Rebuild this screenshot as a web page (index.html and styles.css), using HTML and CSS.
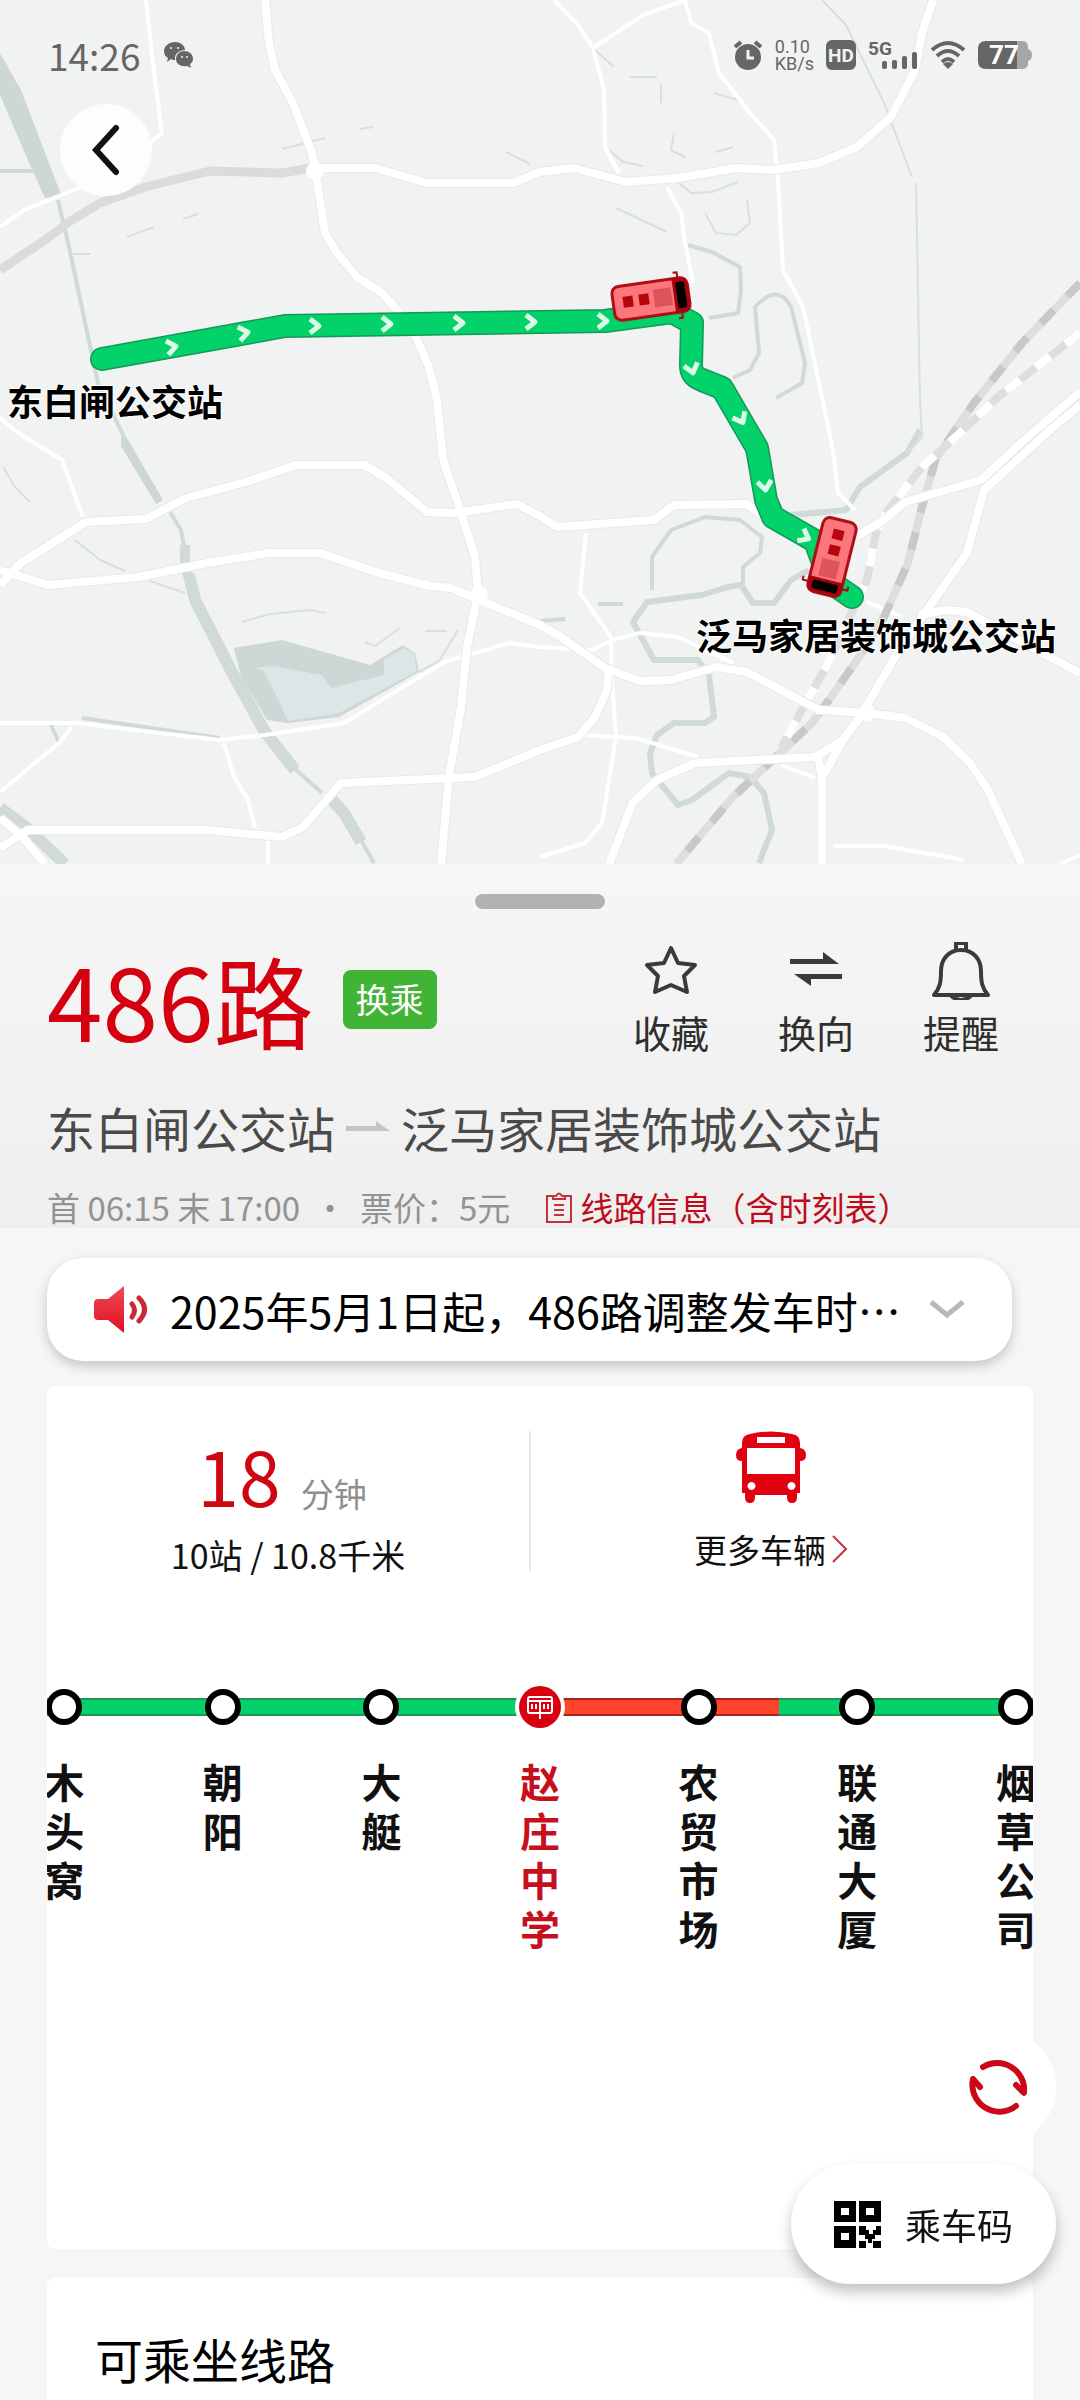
FILE: index.html
```html
<!DOCTYPE html>
<html lang="zh-CN">
<head>
    <meta charset="UTF-8">
    <meta name="viewport" content="width=device-width, initial-scale=1.0">
    <title>486路</title>
    <link rel="stylesheet" href="styles.css">
</head>
<body>
<div class="app">

    <div class="map">
        <svg class="map-canvas" viewBox="0 0 1080 864">
            <defs>
                <path id="arrow" d="M-5 -7 L4 0 L-5 7"/>
                <g id="bus-top">
                    <path class="mirror" d="M29 -18 v-5 h-4 M29 18 v5 h-4"/>
                    <rect class="bus-body" x="-38" y="-17" width="76" height="34" rx="7"/>
                    <path class="bus-front" d="M23 -17 h9 q6 0 6 6 v22 q0 6 -6 6 h-9 z"/>
                    <rect x="26" y="-13" width="9" height="26" rx="2"/>
                    <rect class="hatch" x="-28" y="-6" width="10" height="11"/>
                    <rect class="hatch" x="-12" y="-6" width="10" height="11"/>
                    <rect class="hatch-big" x="3" y="-9" width="18" height="18"/>
                </g>
                <g id="roads">
                    <path d="M265 0 L269 43 L275 70 L293 103 L312 153 L315 170 L320 200 L325 233 L337 253 L358 278 L382 293 L399 312 L415 335 L429 367 L437 400 L442 450 L444 463 L458 503 L475 557 L478 593 L467 647 L461 707 L449 777 L441 864"/>
                    <path d="M315 168 L375 168 L427 183 L513 183 L540 172 L574 168 L626 182 L678 178 L736 168 L774 170 L819 163 L857 147 L891 117 L915 70 L922 33 L933 0"/>
                    <path d="M0 585 L21 563 L86 522 L146 519 L186 498 L246 482 L296 465 L365 465 L389 480 L427 512 L455 513 L517 504 L540 516 L557 527 L654 520 L674 505 L747 504 L764 517"/>
                    <path d="M0 570 L48 585 L138 577 L207 563 L269 553 L320 553 L379 573 L430 586 L451 588 L479 600 L540 625 L561 637 L605 668 L640 681 L671 680 L716 667 L747 672 L819 710 L867 713 L905 718 L943 737 L970 763 L988 790 L1022 864"/>
                    <path d="M0 848 L28 830 L207 830 L282 837 L303 827 L341 783 L475 777 L540 750 L578 737 L595 717 L607 690 L609 668"/>
                    <path d="M0 818 L21 835 L45 864"/>
                    <path d="M609 864 L633 802 L657 780 L695 763 L815 757 L843 740 L860 717 L874 693 L895 657 L922 617 L967 553 L984 490 L1050 430 L1080 405"/>
                    <path d="M857 536 L884 520 L905 502 L981 480 L1022 442 L1080 392"/>
                    <path d="M919 615 L946 610 L967 612 L1050 657 L1080 673"/>
                    <path d="M843 740 L822 778 V864 M818 757 L822 778"/>
                </g>
            </defs>

            <!-- water -->
            <path class="water" d="M0 53 L21 90 L62 197 L45 198 L33 172 L0 95 Z"/>
            <path class="water" d="M121 430 L128 440 L163 500 L156 504 L121 446 Z"/>
            <path class="water" d="M234 648 L282 640 L370 665 L403 645 L415 653 L419 672 L339 717 L288 723 L267 720 L241 677 Z"/>
            <path class="shoal" d="M255 668 L272 666 L322 675 L331 688 L384 675 L384 660 L403 648 L414 654 L417 671 L339 713 L288 721 L275 693 L263 670 Z"/>
            <path class="river thin" d="M0 171 H34 M58 200 L69 247 L86 327 L98 383 L124 437 M170 512 L181 530 L184 546 M294 768 L322 793 M361 840 L374 863 M82 718 L220 738 M50 723 L59 742"/>
            <path class="river mid" d="M185 545 V567 L191 583"/>
            <path class="river wide" d="M189 575 L195 600 L234 676 L265 732 L295 770 M332 800 L344 813 L361 842 M0 808 L26 827 L65 864"/>
            <path class="river bend" d="M920 430 L907 453 L860 487 L846 510 L826 512 L791 515 M809 570 L791 580 L774 603 L753 603 L741 585 L728 587 L702 595 L647 602 L633 622 L654 660 L698 660 L709 675 L714 717 L705 723 L674 723 L657 735 L650 753 L652 773 L678 805 L692 800 L729 773 L750 777 L764 793 L772 830 L759 863"/>
            <path class="river thin" d="M652 590 V557 L671 530 L705 517 L740 520 L762 537 L760 553 L743 567 V585 M540 621 L565 619 M598 604 H623"/>
            <path class="river thin" d="M688 245 L712 252 L740 267 L741 290 L738 313 L709 318 M733 378 L750 370 L759 353 L755 307 Q778 282 791 307 L805 363 L802 383 L776 398"/>
            <path class="river hair" d="M822 0 L846 25 L884 103 L912 177 M916 183 L920 400 L922 437 L907 453 M616 208 L667 232 M678 182 L691 193 L712 192 L738 182 M705 213 L716 233 L736 235 L750 223 L747 200 M593 48 L614 67 M630 77 L657 77 M661 83 V103 M609 150 L623 162 L643 166 M674 133 L671 150 L685 157 M714 93 L738 100 M716 152 L733 147 M506 152 L530 164 M282 149 L325 138 M360 129 L373 127 M127 237 L154 227 M183 219 L198 214 M73 254 H90 M3 467 L15 487 L30 502 M75 540 L100 560 L125 571 M150 581 L185 593 M242 622 L270 614 L310 610 L325 613 M365 642 L375 646 L400 628 M425 631 H447 M458 630 L439 661 L419 672"/>

            <!-- minor streets -->
            <path class="street" d="M146 0 L155 80 L162 133 L150 142 M0 227 L24 210 L81 187 M554 0 L578 25 L593 48 L604 90 L605 147 L619 173 M593 48 L643 15 L685 0 L691 23 L709 33 L719 73 L750 113 L774 140 L778 180 L783 270 L803 307 L833 450 L838 493 L855 510 M667 187 L681 213 L685 243 L693 283"/>
            <path class="street" d="M0 418 L17 432 L62 460 L83 517 M0 723 H76 L220 740 L265 735 L344 723 L444 662 L510 643 L540 647 L592 650 L612 640 L640 633 L678 637 L733 663 M224 743 L234 777 L248 800 L255 828 M268 838 V864 M72 727 L59 743 L0 792"/>
            <path class="street" d="M586 533 L580 593 L611 637 L612 683 L616 737 L602 823 L585 843 L540 857 M581 735 L636 738 L698 757 M833 846 H884 L964 860 M781 765 L815 778 M867 602 L902 617 M1060 864 L1080 855"/>

            <!-- railways -->
            <path class="rail-left" d="M0 270 L45 240 L69 222 L100 203 L145 187 L210 171 L282 173 L310 168"/>
            <path class="rail" d="M1080 283 L1022 343 L974 403 L936 458 L922 507 L908 563 L884 617 L857 660 L829 700 L812 723 L781 752 L733 797 L676 864"/>
            <path class="rail-dash" d="M1080 283 L1022 343 L974 403 L936 458 L922 507 L908 563 L884 617 L857 660 L829 700 L812 723 L781 752 L733 797 L676 864"/>
            <path class="rail" d="M1080 333 L998 397 L960 433 L922 467 L888 510 L876 533 L867 580 L826 667 L809 697 L781 748"/>
            <path class="rail-dash white" d="M1080 333 L998 397 L960 433 L922 467 L888 510 L876 533 L867 580 L826 667 L809 697 L781 748"/>

            <use href="#roads" class="road-edge"/>
            <use href="#roads" class="road"/>
            <circle class="junction" cx="315" cy="171" r="9"/>
            <circle class="junction" cx="479" cy="595" r="9"/>
            <circle class="junction" cx="867" cy="713" r="8"/>

            <!-- bus line -->
            <path class="line-edge" d="M102 359 L285 326 L605 321 L672 312 L692 323 L691 365 Q691 376 702 380 L722 388 L757 448 L766 500 L773 517 L815 541 L830 582 L852 597"/>
            <path class="line-fill" d="M102 359 L285 326 L605 321 L672 312 L692 323 L691 365 Q691 376 702 380 L722 388 L757 448 L766 500 L773 517 L815 541 L830 582 L852 597"/>
            <g class="arrows">
                <use href="#arrow" transform="translate(172 347) rotate(-10)"/>
                <use href="#arrow" transform="translate(244 333) rotate(-10)"/>
                <use href="#arrow" transform="translate(315 326)"/>
                <use href="#arrow" transform="translate(387 324)"/>
                <use href="#arrow" transform="translate(459 323)"/>
                <use href="#arrow" transform="translate(531 322)"/>
                <use href="#arrow" transform="translate(603 321)"/>
                <use href="#arrow" transform="translate(692 369) rotate(75)"/>
                <use href="#arrow" transform="translate(741 419) rotate(62)"/>
                <use href="#arrow" transform="translate(765 486) rotate(82)"/>
                <use href="#arrow" transform="translate(805 537) rotate(28)"/>
            </g>
            <use href="#bus-top" transform="translate(651 299) rotate(-8)"/>
            <use href="#bus-top" transform="translate(832 557) rotate(104)"/>

            <text class="map-label" x="7" y="416">东白闸公交站</text>
            <text class="map-label" x="696" y="650">泛马家居装饰城公交站</text>
        </svg>

        <div class="status-bar">
            <span class="clock">14:26</span>
            <svg class="wechat" width="30" height="26" viewBox="0 0 30 26">
                <path d="M11 0 C17 0 21 4 21 8 C15 8 11 12 11 16 C11 17 11 18 12 18 C10 18 8 18 7 17 L3 20 L4 16 C1 14 0 12 0 9 C0 4 5 0 11 0 Z"/>
                <path d="M20 9 C25 9 29 12 29 17 C29 19 28 21 26 22 L27 26 L23 24 C17 25 12 22 12 17 C12 12 16 9 20 9 Z"/>
                <g class="eyes"><circle cx="7" cy="6" r="1"/><circle cx="14" cy="6" r="1"/><circle cx="18" cy="15" r="1"/><circle cx="23" cy="15" r="1"/></g>
            </svg>
            <div class="status-icons">
                <svg width="30" height="30" viewBox="0 0 30 30">
                    <circle cx="15" cy="17" r="13"/>
                    <path class="line" d="M2 7 L8 2 M28 7 L22 2"/>
                    <path class="line light" d="M15 10 V18 H21"/>
                </svg>
                <span class="net-speed">0.10<br>KB/s</span>
                <svg width="30" height="30" viewBox="0 0 30 30">
                    <rect width="30" height="30" rx="6"/>
                    <text class="hd" x="15" y="22" text-anchor="middle">HD</text>
                </svg>
                <svg width="50" height="36" viewBox="0 0 50 36">
                    <text class="gen" x="0" y="18">5G</text>
                    <rect x="14" y="24" width="5" height="8" rx="2"/>
                    <rect x="24" y="23" width="5" height="9" rx="2"/>
                    <rect x="34" y="19" width="5" height="13" rx="2"/>
                    <rect x="44" y="15" width="5" height="17" rx="2"/>
                </svg>
                <svg width="36" height="30" viewBox="0 0 36 30">
                    <path class="wave" d="M2 10 Q18 -4 34 10 M7 16 Q18 6 29 16 M12 22 Q18 16 24 22"/>
                    <path d="M13 24 Q18 20 23 24 L18 29 Z"/>
                </svg>
                <svg width="54" height="28" viewBox="0 0 54 28">
                    <path class="bat-empty" d="M38 0 h6 q6 0 6 6 v2 q4 1 4 6 t-4 6 v2 q0 6 -6 6 h-6 z"/>
                    <path d="M8 0 H39 V28 H8 Q0 28 0 20 V8 Q0 0 8 0 Z"/>
                    <text class="bat" x="26" y="23" text-anchor="middle">77</text>
                </svg>
            </div>
        </div>

        <button class="back-btn" aria-label="返回">
            <svg width="28" height="52" viewBox="0 0 28 52"><path d="M24 4 L4 26 L24 48"/></svg>
        </button>
    </div>

    <header class="panel">
        <div class="handle"></div>
        <div class="title-row">
            <h1>486路</h1>
            <button class="transfer-btn">换乘</button>
            <div class="actions">
                <button class="action">
                    <svg width="58" height="58" viewBox="0 0 58 58"><path d="M29 6 L36 21 L53 23 L42 34 L45 50 L29 43 L13 50 L16 34 L5 23 L22 21 Z"/></svg>
                    <span>收藏</span>
                </button>
                <button class="action">
                    <svg width="58" height="58" viewBox="0 0 58 58">
                        <path class="solid" d="M3 17 H36 V10 L52 22 H3 Z M55 32 V37 H24 V44 L7 32 Z"/>
                    </svg>
                    <span>换向</span>
                </button>
                <button class="action">
                    <svg width="58" height="58" viewBox="0 0 58 58">
                        <path d="M24 8 V1 H34 V8 M29 8 C16 8 9 18 9 29 C9 40 8 46 2 53 H56 C50 46 49 40 49 29 C49 18 42 8 29 8 Z M19 54 Q29 62 39 54"/>
                    </svg>
                    <span>提醒</span>
                </button>
            </div>
        </div>
        <div class="direction">
            <span>东白闸公交站</span>
            <svg width="44" height="12" viewBox="0 0 44 12"><path d="M0 5 H30 V0 L44 10 H0 Z"/></svg>
            <span>泛马家居装饰城公交站</span>
        </div>
        <div class="schedule">
            <span>首 06:15 末 17:00</span>
            <span class="dot">·</span>
            <span>票价：5元</span>
            <a class="info-link" href="#">
                <svg width="26" height="31" viewBox="0 0 26 31">
                    <path d="M7 4 H1 V30 H25 V4 H19 M7 7 V4 H10 Q13 -1 16 4 H19 V7 Z M8 13 H18 M8 18 H18 M8 23 H18"/>
                </svg>
                <span>线路信息（含时刻表）</span>
            </a>
        </div>
    </header>

    <button class="notice">
        <svg width="54" height="48" viewBox="0 0 54 48">
            <defs>
                <linearGradient id="horn" x1="0" y1="0" x2="0" y2="1">
                    <stop offset="0" stop-color="#ee4a54"/>
                    <stop offset="1" stop-color="#e0101f"/>
                </linearGradient>
            </defs>
            <path fill="url(#horn)" d="M4 13 H14 L30 0 V47 L14 34 H4 Q0 34 0 30 V17 Q0 13 4 13 Z"/>
            <path class="sound" d="M38 18 Q43 24 38 31 M45 12 Q56 23 45 35"/>
        </svg>
        <span class="notice-text">2025年5月1日起，486路调整发车时…</span>
        <svg class="expand" width="36" height="20" viewBox="0 0 36 20"><path d="M2 2 L18 15 L34 2"/></svg>
    </button>

    <main class="card">
        <div class="stats">
            <div class="stat">
                <p class="eta"><strong>18</strong><span>分钟</span></p>
                <p class="distance">10站 / 10.8千米</p>
            </div>
            <a class="stat more" href="#">
                <svg width="70" height="72" viewBox="0 0 70 72">
                    <path fill-rule="evenodd" d="M6 12 Q6 4 14 3 Q35 -2 56 3 Q64 4 64 12 V17 Q70 18 70 24 Q70 30 64 30 V62 H61 V66 Q61 72 56 72 Q51 72 51 66 V64 H19 V66 Q19 72 14 72 Q9 72 9 66 V62 H6 V30 Q0 30 0 24 Q0 18 6 17 Z M21 6 V12 H49 V6 Z M11 17 V43 H59 V17 Z M15 51 a4 4 0 1 0 1 0 Z M55 51 a4 4 0 1 0 1 0 Z"/>
                </svg>
                <span class="more-text">更多车辆<svg width="18" height="30" viewBox="0 0 18 30"><path d="M3 2 L16 15 L3 28"/></svg></span>
            </a>
        </div>

        <ul class="stops">
            <li class="stop"><i class="dot-mark"></i><span>木头窝</span></li>
            <li class="stop"><i class="dot-mark"></i><span>朝阳</span></li>
            <li class="stop"><i class="dot-mark"></i><span>大艇</span></li>
            <li class="stop current">
                <i class="dot-mark">
                    <svg width="42" height="42" viewBox="0 0 42 42">
                        <rect x="9" y="11" width="24" height="16" rx="2"/>
                        <path d="M9 15 H33 M13 18 V23 M17 18 V23 M25 18 V23 M29 18 V23 M21 15 V33"/>
                    </svg>
                </i>
                <span>赵庄中学</span>
            </li>
            <li class="stop"><i class="dot-mark"></i><span>农贸市场</span></li>
            <li class="stop"><i class="dot-mark"></i><span>联通大厦</span></li>
            <li class="stop"><i class="dot-mark"></i><span>烟草公司</span></li>
        </ul>
    </main>

    <section class="card routes">
        <h2>可乘坐线路</h2>
    </section>

    <div class="floating">
        <button class="refresh-btn" aria-label="刷新">
            <svg width="62" height="62" viewBox="0 0 62 62">
                <path d="M15 11 A27 27 0 0 1 56 37 L48 29 M48 50 A27 27 0 0 1 5 23 L12 31"/>
            </svg>
        </button>
        <button class="code-btn">
            <svg width="47" height="47" viewBox="0 0 47 47">
                <path fill-rule="evenodd" d="M0 0 H22 V21 H0 Z M7 7 V14 H15 V7 Z M25 0 H47 V21 H25 Z M32 7 V14 H40 V7 Z M0 25 H22 V47 H0 Z M7 32 V39 H15 V32 Z"/>
                <path d="M25 25 h7 v4 h3 v4 h4 v-4 h3 v-4 h5 v9 h-6 v4 h-3 v4 h-4 v-4 h-3 v-4 h-6 Z M25 40 h7 v7 h-7 Z M39 40 h8 v7 h-8 Z"/>
            </svg>
            <span>乘车码</span>
        </button>
    </div>

</div>
</body>
</html>
```
FILE: styles.css
```css
* {
    margin: 0;
    padding: 0;
    box-sizing: border-box;
}
body {
    background: #f6f6f6;
    font-family: "Noto Sans CJK SC", sans-serif;
    color: #111;
}
button {
    border: none;
    background: none;
    font: inherit;
    color: inherit;
    cursor: pointer;
}
a {
    text-decoration: none;
    color: inherit;
}
svg {
    display: block;
    flex: none;
}
.app {
    display: flex;
    flex-direction: column;
    min-height: 100vh;
}

/* map */
.map {
    position: relative;
    background: #f1f2f2;
}
.map-canvas {
    width: 100%;
    height: auto;
}
.map-canvas path {
    stroke-linejoin: round;
}
.water {
    fill: #cdd8d6;
}
.shoal {
    fill: #dde6e6;
}
.river,
.street,
.rail,
.rail-dash,
.rail-left {
    fill: none;
}
.river {
    stroke: #d0dad8;
}
.river.thin {
    stroke-width: 4;
}
.river.hair {
    stroke: #d9dfde;
    stroke-width: 2;
}
.river.mid {
    stroke-width: 10;
}
.river.wide {
    stroke-width: 12;
}
.river.bend {
    stroke-width: 6;
}
.street {
    stroke: #fff;
    stroke-width: 4;
}
.rail-left {
    stroke: #dcdada;
    stroke-width: 9;
}
.rail {
    stroke: #dedede;
    stroke-width: 8;
}
.rail-dash {
    stroke: #c8c8c8;
    stroke-width: 8;
    stroke-dasharray: 18 20;
}
.rail-dash.white {
    stroke: #fff;
}
.road-edge,
.road {
    fill: none;
    stroke: #e8e9e9;
    stroke-width: 10;
}
.road {
    stroke: #fff;
    stroke-width: 8;
}
.junction {
    fill: #fff;
}
.line-edge,
.line-fill {
    fill: none;
    stroke: #14995a;
    stroke-width: 24;
    stroke-linecap: round;
}
.line-fill {
    stroke: #03d169;
    stroke-width: 21;
}
.arrows {
    fill: none;
    stroke: #d9fbe8;
    stroke-width: 5;
}
.mirror {
    fill: none;
    stroke: #a30d14;
    stroke-width: 2;
}
.bus-body {
    fill: #fb777c;
    stroke: #b00e15;
    stroke-width: 3;
}
.bus-front {
    fill: #a9040c;
}
.hatch {
    fill: #b8040d;
}
.hatch-big {
    fill: #dc555d;
}
.map-label {
    font-size: 36px;
    font-weight: 700;
    fill: #000;
    stroke: #fff;
    stroke-width: 2px;
    paint-order: stroke;
}

/* status bar */
.status-bar {
    position: absolute;
    top: 0;
    left: 0;
    right: 0;
    height: 110px;
    padding: 0 48px;
    display: flex;
    align-items: center;
    color: #666;
    fill: #666;
}
.clock {
    font-size: 37px;
    line-height: 40px;
}
.wechat {
    margin-left: 24px;
}
.eyes {
    fill: #f1f2f2;
}
.status-icons {
    margin-left: auto;
    display: flex;
    align-items: center;
    gap: 12px;
}
.net-speed {
    font: 18px/17px Roboto, sans-serif;
}
.line,
.wave {
    fill: none;
    stroke: #666;
    stroke-width: 4;
}
.line.light {
    stroke: #f1f2f2;
    stroke-width: 3;
}
.hd,
.gen,
.bat {
    font-family: Roboto, sans-serif;
    font-weight: 700;
    font-size: 19px;
}
.hd {
    fill: #f1f2f2;
}
.bat {
    font-size: 26px;
    fill: #fff;
}
.bat-empty {
    fill: #a6a6a6;
}
.back-btn {
    position: absolute;
    left: 60px;
    top: 104px;
    width: 92px;
    height: 92px;
    border-radius: 50%;
    background: #fdfdfd;
    display: flex;
    align-items: center;
    justify-content: center;
}
.back-btn path {
    fill: none;
    stroke: #111;
    stroke-width: 6;
    stroke-linecap: round;
}

/* line header */
.panel {
    padding: 30px 47px 0;
    background: linear-gradient(#f6f6f6, #efefef);
}
.handle {
    width: 130px;
    height: 15px;
    margin: 0 auto 33px;
    border-radius: 8px;
    background: #b1b1b1;
}
.title-row {
    display: flex;
    align-items: center;
}
h1 {
    font-size: 100px;
    line-height: 100px;
    font-weight: 400;
    color: #d5000f;
}
.transfer-btn {
    height: 59px;
    margin-left: 29px;
    padding: 0 13px;
    border-radius: 8px;
    background: #41b335;
    color: #fff;
    font-size: 34px;
    line-height: 56px;
}
.actions {
    margin-left: auto;
    margin-right: 34px;
    display: flex;
    gap: 69px;
}
.action {
    display: flex;
    flex-direction: column;
    align-items: center;
    gap: 8px;
    font-size: 38px;
    line-height: 48px;
    color: #2e2e2e;
}
.action path {
    fill: none;
    stroke: #3a3a3a;
    stroke-width: 4;
    stroke-linejoin: round;
}
.action .solid {
    fill: #3a3a3a;
    stroke: none;
}
.direction {
    display: flex;
    align-items: center;
    gap: 11px;
    margin-top: 41px;
    font-size: 48px;
    line-height: 60px;
    color: #4a4a4a;
}
.direction path {
    fill: #c4c4c4;
}
.schedule {
    display: flex;
    align-items: center;
    margin-top: 29px;
    font-size: 33px;
    line-height: 42px;
    color: #939393;
}
.dot {
    width: 60px;
    text-align: center;
}
.info-link {
    display: flex;
    align-items: center;
    gap: 8px;
    margin-left: 36px;
    color: #be0b1b;
}
.info-link path {
    fill: none;
    stroke: #c4303c;
    stroke-width: 2;
}

/* notice */
.notice {
    display: flex;
    align-items: center;
    height: 103px;
    margin: 30px 68px 25px 47px;
    padding: 0 47px;
    border-radius: 36px;
    background: #fff;
    box-shadow: 0 5px 12px rgba(0, 0, 0, 0.2);
    font-size: 43px;
    line-height: 60px;
    color: #000;
    text-align: left;
}
.notice-text {
    flex: 1;
    margin-left: 22px;
    white-space: nowrap;
}
.sound {
    fill: none;
    stroke: #c92a38;
    stroke-width: 5;
    stroke-linecap: round;
}
.expand path {
    fill: none;
    stroke: #b9b9b9;
    stroke-width: 5;
}

/* cards */
.card {
    margin: 0 47px 29px;
    border-radius: 8px;
    background: #fff;
    overflow: hidden;
}
.stats {
    display: grid;
    grid-template-columns: 1fr 1fr;
    padding: 45px 22px 0 0;
}
.stat {
    display: flex;
    flex-direction: column;
    align-items: center;
    height: 140px;
}
.stat + .stat {
    border-left: 2px solid #e8e8e8;
}
.eta {
    display: flex;
    align-items: baseline;
    gap: 20px;
    padding-right: 12px;
    line-height: 44px;
    color: #8e8e8e;
    font-size: 33px;
}
.eta strong {
    font-size: 75px;
    line-height: 88px;
    font-weight: 400;
    color: #cf0512;
}
.distance {
    margin-top: 14px;
    font-size: 34px;
    line-height: 44px;
}
.more {
    gap: 26px;
}
.more > svg {
    fill: #e0000f;
}
.more-text {
    display: flex;
    align-items: center;
    gap: 4px;
    font-size: 33px;
    line-height: 40px;
}
.more-text path {
    fill: none;
    stroke: #c8303c;
    stroke-width: 2;
}

/* stops: the track is the list background, red where traffic is slow */
.stops {
    display: grid;
    grid-template-columns: repeat(7, 1fr);
    margin: 115px -62px 0;
    padding-bottom: 296px;
    list-style: none;
    background-image:
        linear-gradient(90deg, #03d169 50%, #ff432c 50% 71.5%, #03d169 71.5%),
        linear-gradient(90deg, #1d9658 50%, #a3261c 50% 71.5%, #1d9658 71.5%);
    background-position: 0 14px, 0 12px;
    background-size: 100% 14px, 100% 18px;
    background-repeat: no-repeat;
}
.stop {
    display: flex;
    flex-direction: column;
    align-items: center;
    gap: 29px;
    font-size: 40px;
    line-height: 49px;
    font-weight: 700;
}
.stop span {
    width: 40px;
}
.dot-mark {
    width: 36px;
    height: 36px;
    margin: 3px 0;
    border: 6px solid #000;
    border-radius: 50%;
    background: #fff;
}
.current {
    color: #c6101e;
}
.current .dot-mark {
    width: 42px;
    height: 42px;
    margin: 0;
    border: none;
    background: #d8000f;
    box-shadow: 0 0 0 4px #fff;
}
.current svg {
    fill: none;
    stroke: #fff;
    stroke-width: 2;
}
.routes {
    flex: 1;
    margin-bottom: 0;
    padding: 47px 48px 0;
    border-radius: 8px 8px 0 0;
}
h2 {
    font-size: 48px;
    line-height: 66px;
    font-weight: 400;
    color: #000;
}

/* floating buttons */
.floating {
    position: fixed;
    right: 24px;
    bottom: 116px;
    display: flex;
    flex-direction: column;
    align-items: flex-end;
    gap: 20px;
}
.refresh-btn {
    width: 114px;
    height: 114px;
    border-radius: 50%;
    background: #fff;
    display: flex;
    align-items: center;
    justify-content: center;
}
.refresh-btn path {
    fill: none;
    stroke: #cc0717;
    stroke-width: 6;
    stroke-linecap: round;
    stroke-linejoin: round;
}
.code-btn {
    display: flex;
    align-items: center;
    gap: 24px;
    height: 120px;
    padding: 0 43px;
    border-radius: 60px;
    background: #fff;
    box-shadow: 0 8px 14px rgba(0, 0, 0, 0.24);
    font-size: 36px;
    color: #111;
}
```
